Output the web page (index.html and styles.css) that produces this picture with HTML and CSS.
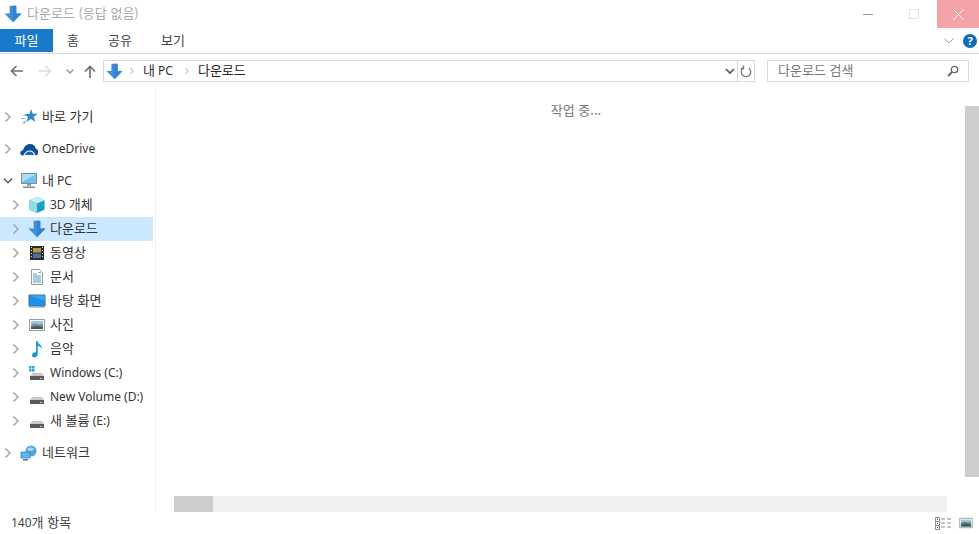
FILE: index.html
```html
<!DOCTYPE html>
<html lang="ko">
<head>
<meta charset="utf-8">
<title>다운로드</title>
<link rel="stylesheet" href="styles.css">
</head>
<body>
<svg class="defs" width="0" height="0" aria-hidden="true">
  <defs>
    <symbol id="dl" viewBox="0 0 18 18">
      <path d="M5.700 1.500c0-.4.300-.7.700-.7h5.200c.4 0 .7.300.7.700v7h5.200L9 17.200.5 8.500h5.200z" fill="#3f8fdc"/>
      <path d="M9 .8h2.600c.4 0 .7.300.7.700v7h5.200L9 17.200z" fill="#3383d2"/>
    </symbol>
    <symbol id="chev" viewBox="0 0 8 12">
      <path d="M1.500 1.500 6 6l-4.500 4.500" fill="none" stroke="#a6a6a6" stroke-width="1.500"/>
    </symbol>
    <symbol id="drive" viewBox="0 0 16 16">
      <path d="M3 8h10l2 3H1z" fill="#c9c9c9"/>
      <path d="M1 11h14v4H1z" fill="#5a5a5a"/>
      <path d="M11 13h2v1h-2z" fill="#9fe08a"/>
    </symbol>
    <symbol id="pic" viewBox="0 0 16 14">
      <path d="M.5 1.500h15v11H.5z" fill="#fff" stroke="#9a9a9a"/>
      <path d="M2 3h12v4H2z" fill="#9cc6e6"/>
      <path d="M2 7l4-1.500 4 1 4-.5v5H2z" fill="#5f8078"/>
      <path d="M2 9l6-1 6 1v2H2z" fill="#3f5a58"/>
    </symbol>
  </defs>
</svg>
<div class="window">
  <header class="titlebar">
    <svg class="title-icon"><use href="#dl"/></svg>
    <span class="title-text ko">다운로드 (응답 없음)</span>
    <div class="caption">
      <span class="cap-btn"><i class="cap-min"></i></span>
      <span class="cap-btn"><i class="cap-max"></i></span>
      <span class="cap-close">
        <svg width="11" height="11" viewBox="0 0 11 11"><path d="M.5.500l10 10M10.500.5l-10 10" stroke="#fff" stroke-width="1" fill="none"/></svg>
      </span>
    </div>
  </header>
  <nav class="ribbon">
    <span class="tab tab-file ko">파일</span>
    <span class="tab ko">홈</span>
    <span class="tab ko">공유</span>
    <span class="tab ko">보기</span>
    <span class="ribbon-right">
      <svg width="10" height="6" viewBox="0 0 10 6"><path d="M.5.500 5 5 9.500.5" fill="none" stroke="#a0a0a0"/></svg>
      <span class="help">?</span>
    </span>
  </nav>
  <div class="addressbar">
    <div class="navbtns">
      <svg width="13" height="12" viewBox="0 0 13 12"><path d="M13 6H2M6.500 1 1.500 6l5 5" fill="none" stroke="#6e6e6e" stroke-width="1.600"/></svg>
      <svg class="gap-fwd" width="13" height="12" viewBox="0 0 13 12"><path d="M0 6h11M6.500 1l5 5-5 5" fill="none" stroke="#dcdcdc" stroke-width="1.600"/></svg>
      <svg class="gap-down" width="8" height="5" viewBox="0 0 8 5"><path d="M.8.800 4 4 7.200.8" fill="none" stroke="#8c8c8c" stroke-width="1.300"/></svg>
      <svg class="gap-up" width="12" height="13" viewBox="0 0 12 13"><path d="M6 13V2M1 6.500l5-5 5 5" fill="none" stroke="#6e6e6e" stroke-width="1.600"/></svg>
    </div>
    <div class="pathbox">
      <svg class="path-icon"><use href="#dl"/></svg>
      <svg class="crumb-chev"><use href="#chev"/></svg>
      <span class="crumb"><span class="ko">내</span> PC</span>
      <svg class="crumb-chev"><use href="#chev"/></svg>
      <span class="crumb crumb-cur ko">다운로드</span>
      <svg class="path-drop" width="10" height="7" viewBox="0 0 10 7"><path d="M1 1l4 4 4-4" fill="none" stroke="#555" stroke-width="1.600"/></svg>
      <span class="refresh">
        <svg width="12" height="13" viewBox="0 0 12 13"><path d="M3.200 3.200a4.700 4.700 0 1 0 5.600 0M3.500 .5v3h-3" fill="none" stroke="#7a7a7a" stroke-width="1.400"/></svg>
      </span>
    </div>
    <div class="searchbox">
      <span class="search-text ko">다운로드 검색</span>
      <svg width="12" height="12" viewBox="0 0 12 12"><circle cx="7.500" cy="4.500" r="3.200" fill="none" stroke="#666" stroke-width="1.300"/><path d="M5 7l-4 4" stroke="#666" stroke-width="1.800"/></svg>
    </div>
  </div>
  <main class="main">
    <aside class="tree">
      <div class="row top">
        <svg class="chev"><use href="#chev"/></svg>
        <svg class="ico" viewBox="0 0 18 16"><path d="M11 0l1.700 4.700 5 .1-4 3 1.500 5-4.400-2.900-4.200 3 1.300-5L4.500 5l5 .1z" fill="#2f86d6"/><path d="M2 14l4-3-1 4zM1 9h4v1H1zM3 6h3v1H3z" fill="#8cbce6"/></svg>
        <span class="ko">바로 가기</span>
      </div>
      <div class="row top">
        <svg class="chev"><use href="#chev"/></svg>
        <svg class="ico" viewBox="0 0 18 16"><path d="M1.500 14.500C-.3 13-.3 9.800 3 9.200 4 5.500 6.800 3 10 3c3.200 0 5.200 2 5.800 4.700 2 .5 2.700 2.200 2.200 4.300-.2 1.200-1 2.500-2 2.500z" fill="#0f4f96"/><path d="M4 14.500c1.200-3 3.300-4.500 5.700-4.500 2.300 0 4.300 1.500 5.300 4.500z" fill="#1668b8" stroke="#fff" stroke-width="1.200"/></svg>
        <span>OneDrive</span>
      </div>
      <div class="row top">
        <svg class="chev open" width="10" height="6" viewBox="0 0 10 6"><path d="M1 .8 5 4.800 9 .8" fill="none" stroke="#555" stroke-width="1.500"/></svg>
        <svg class="ico" viewBox="0 0 18 16"><path d="M1.500 .5h15v10h-15z" fill="#6fc2ee" stroke="#7f8a92"/><path d="M2 1h14L2 9z" fill="#a9e0f8"/><path d="M7 11h4v2H7z" fill="#98a4ac"/><path d="M3 13.500h12v1.500H3z" fill="#7f8a92"/></svg>
        <span><span class="ko">내</span> PC</span>
      </div>
      <div class="row sub">
        <svg class="chev"><use href="#chev"/></svg>
        <svg class="ico" viewBox="0 0 18 18"><path d="M9 1l7.500 3.200v9.600L9 17 1.500 13.800V4.200z" fill="#1f9cc4"/><path d="M9 1l7.500 3.200L9 7.400 1.500 4.200z" fill="#c7f0f5"/><path d="M1.500 4.200 9 7.400V17l-7.500-3.200z" fill="#8fdde6"/></svg>
        <span>3D <span class="ko">개체</span></span>
      </div>
      <div class="row sub selected">
        <svg class="chev"><use href="#chev"/></svg>
        <svg class="ico"><use href="#dl"/></svg>
        <span class="ko">다운로드</span>
      </div>
      <div class="row sub">
        <svg class="chev"><use href="#chev"/></svg>
        <svg class="ico" viewBox="0 0 18 16"><path d="M2 1h14v14H2z" fill="#2b2b2b"/><path d="M5 3h8v4.500H5z" fill="#b59a48"/><path d="M5 8.500h8V13H5z" fill="#4f6f9c"/><path d="M3 2h1v1H3zM3 5h1v1H3zM3 8h1v1H3zM3 11h1v1H3zM14 2h1v1h-1zM14 5h1v1h-1zM14 8h1v1h-1zM14 11h1v1h-1z" fill="#ddd"/></svg>
        <span class="ko">동영상</span>
      </div>
      <div class="row sub">
        <svg class="chev"><use href="#chev"/></svg>
        <svg class="ico" viewBox="0 0 18 16"><path d="M3.500.5h8l3 3v12h-11z" fill="#fff" stroke="#9a9a9a"/><path d="M5 5h4M5 7h8M5 9h8M5 11h8M5 13h8" stroke="#4f9ac4"/><path d="M10 3h3v1h-3z" fill="#7fb07f"/></svg>
        <span class="ko">문서</span>
      </div>
      <div class="row sub">
        <svg class="chev"><use href="#chev"/></svg>
        <svg class="ico" viewBox="0 0 18 16"><path d="M1 2h16v11H1z" fill="#1e90e8" stroke="#3a6f9c"/><path d="M1.500 2.500h15v5z" fill="#3ea6f2"/><path d="M1 13.500h16v1H1z" fill="#7f98ac"/></svg>
        <span class="ko">바탕 화면</span>
      </div>
      <div class="row sub">
        <svg class="chev"><use href="#chev"/></svg>
        <svg class="ico" viewBox="0 0 18 14"><path d="M1.500 1.500h15v11h-15z" fill="#fff" stroke="#9a9a9a"/><path d="M3 3h12v4H3z" fill="#9cc6e6"/><path d="M3 7l4-1.500 4 1 4-.5v5H3z" fill="#6f9088"/><path d="M3 9l6-1 6 1v2H3z" fill="#3f5a58"/></svg>
        <span class="ko">사진</span>
      </div>
      <div class="row sub">
        <svg class="chev"><use href="#chev"/></svg>
        <svg class="ico" viewBox="0 0 18 18"><path d="M8 1h1.500c.3 3 4.500 3.500 4.500 8-1-2-3-3-4.200-3v8c0 2-1.800 3.500-3.500 3.500S4 16.300 4 15s1.500-2.800 3-2.800c.4 0 .8.100 1 .2z" fill="#1c9ad6"/></svg>
        <span class="ko">음악</span>
      </div>
      <div class="row sub">
        <svg class="chev"><use href="#chev"/></svg>
        <svg class="ico" viewBox="0 0 18 16"><path d="M1 1h2.500v2.500H1zM4 1h2.500v2.500H4zM1 4h2.500v2.500H1zM4 4h2.500v2.500H4z" fill="#27a5d8"/><path d="M5 8h9l2 3H2z" fill="#c9c9c9"/><path d="M2 11h14v4H2z" fill="#5a5a5a"/><path d="M12 13h2v1h-2z" fill="#9fe08a"/></svg>
        <span>Windows (C:)</span>
      </div>
      <div class="row sub">
        <svg class="chev"><use href="#chev"/></svg>
        <svg class="ico" viewBox="-1 0 18 16"><use href="#drive" width="16" height="16"/></svg>
        <span>New Volume (D:)</span>
      </div>
      <div class="row sub">
        <svg class="chev"><use href="#chev"/></svg>
        <svg class="ico" viewBox="-1 0 18 16"><use href="#drive" width="16" height="16"/></svg>
        <span><span class="ko">새 볼륨</span> (E:)</span>
      </div>
      <div class="row top">
        <svg class="chev"><use href="#chev"/></svg>
        <svg class="ico" viewBox="0 0 18 16"><circle cx="11" cy="6" r="5.500" fill="#4fa6e0"/><path d="M7 4c2-2 5-2 7 0-1 2-5 3-7 0z" fill="#a8dcf8"/><path d="M1 7h9v6H1z" fill="#5fb4ea" stroke="#3a7fb0" stroke-width=".8"/><path d="M3 14h5v1.500H3z" fill="#3a7fb0"/></svg>
        <span class="ko">네트워크</span>
      </div>
    </aside>
    <section class="content">
      <div class="content-main">
        <p class="working ko">작업 중...</p>
        <div class="vscroll"></div>
      </div>
      <div class="hscroll"><div class="hthumb"></div></div>
    </section>
  </main>
  <footer class="status">
    <span>140<span class="ko">개 항목</span></span>
    <span class="views">
      <svg width="17" height="13" viewBox="0 0 17 13"><path d="M.5.500h4v12h-4zM.5 4.500h4M.5 8.500h4" fill="none" stroke="#8c8c8c"/><path d="M2 2h1v1H2zM2 6h1v1H2zM2 10h1v1H2z" fill="#555"/><path d="M6 2h4M12 2h4M6 6h4M12 6h4M6 10h4M12 10h4" stroke="#8c8c8c"/></svg>
      <svg width="14" height="12" viewBox="0 0 16 14"><use href="#pic" width="16" height="14"/></svg>
    </span>
  </footer>
</div>
</body>
</html>
```
FILE: styles.css
```css
* { box-sizing: border-box; }
html, body { margin: 0; padding: 0; height: 100%; background: #fff; }
body { font: 12px/16px "Noto Sans", "Noto Sans CJK KR", sans-serif; color: #444; overflow: hidden; }
.defs { position: absolute; }
.ko { font-family: "Noto Sans CJK KR", "Noto Sans", sans-serif; font-size: 13px; line-height: 12px; padding-bottom: 2px; }
.window { width: 979px; height: 534px; display: flex; flex-direction: column; }

.titlebar { height: 29px; display: flex; align-items: center; padding: 0 0 2px 4px; }
.title-icon { width: 18px; height: 18px; }
.title-text { margin-left: 5px; color: #a8a8a8; }
.caption { margin-left: auto; align-self: flex-start; display: flex; }
.cap-btn { width: 46px; height: 28px; display: flex; align-items: center; justify-content: center; }
.cap-min { width: 10px; height: 1px; background: #999; }
.cap-max { width: 10px; height: 10px; border: 1px solid #e4e4e4; }
.cap-close { width: 42px; height: 28px; background: #f4a3a8; display: flex; align-items: center; justify-content: center; }

.ribbon { height: 25px; display: flex; align-items: stretch; border-bottom: 1px solid #dadada; }
.tab { display: flex; align-items: center; justify-content: center; height: 23px; color: #444; }
.tab:nth-child(2) { width: 40px; }
.tab:nth-child(3) { width: 54px; }
.tab:nth-child(4) { width: 52px; }
.tab-file { width: 53px; background: #1979ca; color: #fff; }
.ribbon-right { margin-left: auto; display: flex; align-items: center; gap: 9px; padding: 0 2px 0 0; height: 23px; }
.help { width: 14px; height: 14px; border-radius: 50%; background: #0f6cbd; color: #fff; font-size: 11px; line-height: 14px; font-weight: 700; text-align: center; }

.addressbar { height: 34px; display: flex; align-items: center; padding-left: 10px; }
.navbtns { width: 93px; display: flex; align-items: center; }
.gap-fwd { margin-left: 16px; }
.gap-down { margin-left: 14px; }
.gap-up { margin-left: 10px; }
.pathbox { width: 652px; height: 22px; border: 1px solid #d9d9d9; display: flex; align-items: center; padding-left: 2px; color: #333; }
.path-icon { width: 17px; height: 17px; }
.crumb-chev { width: 6px; height: 8px; margin: 0 8px 0 6px; }
.crumb + .crumb-chev { margin-left: 11px; }
.crumb-cur { color: #222; }
.path-drop { margin-left: auto; margin-right: 2px; }
.refresh { width: 17px; height: 20px; border-left: 1px solid #d9d9d9; display: flex; align-items: center; justify-content: center; }
.searchbox { width: 202px; height: 22px; margin-left: 12px; border: 1px solid #d9d9d9; display: flex; align-items: center; justify-content: space-between; padding: 0 9px 0 10px; color: #777; }

.main { flex: 1; display: flex; min-height: 0; }
.tree { width: 156px; border-right: 1px solid #f0f0f0; padding-top: 17px; }
.row { height: 24px; width: 153px; display: flex; align-items: center; white-space: nowrap; color: #333; }
.row.top { padding-left: 4px; margin-bottom: 8px; }
.row.top:nth-child(3) { margin-bottom: 0; }
.row.sub { padding-left: 12px; }
.row.sub:nth-child(13) { margin-bottom: 8px; }
.row.selected { background: #cce8ff; }
.chev { width: 8px; height: 12px; flex: none; }
.chev.open { width: 10px; height: 6px; margin-left: -1px; margin-right: -1px; }
.ico { width: 18px; height: 18px; margin-left: 8px; margin-right: 4px; flex: none; }

.content { flex: 1; display: flex; flex-direction: column; min-width: 0; }
.content-main { flex: 1; display: flex; min-height: 0; }
.working { flex: 1; margin: 16px 0 0; text-align: center; color: #777; padding-left: 31px; }
.vscroll { width: 14px; margin-top: 18px; margin-bottom: 19px; background: #cdcdcd; }
.hscroll { height: 16px; margin-left: 18px; margin-right: 32px; background: #f0f0f0; }
.hthumb { width: 39px; height: 16px; background: #cdcdcd; }

.status { height: 22px; display: flex; align-items: center; justify-content: space-between; padding: 0 6px 0 11px; color: #444; }
.views { display: flex; align-items: center; gap: 7px; }
```
